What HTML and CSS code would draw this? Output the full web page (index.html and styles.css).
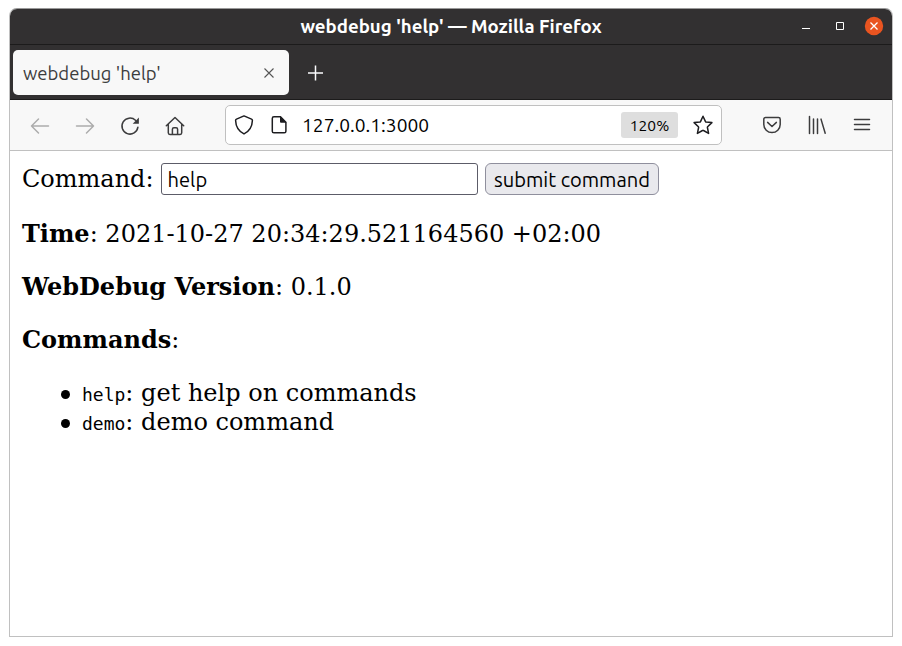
FILE: index.html
```html
<!DOCTYPE html>
<html lang="en">
<head>
<meta charset="utf-8">
<title>webdebug 'help'</title>
<link rel="stylesheet" href="styles.css">
</head>
<body>
<div class="window">
  <header class="titlebar">
    <span class="window-title">webdebug 'help' — Mozilla Firefox</span>
    <div class="window-controls">
      <svg width="10" height="20" viewBox="0 0 10 20"><path d="M1 12.5h8" stroke="#fff"/></svg>
      <svg width="10" height="20" viewBox="0 0 10 20"><path d="M1.500 6.500h7v7h-7z" stroke="#fff" fill="none"/></svg>
      <svg width="20" height="20" viewBox="0 0 20 20"><circle cx="10" cy="10" r="9.200" fill="#e95420"/><path d="M6.500 6.500l7 7m0-7l-7 7" stroke="#fff" stroke-width="1.3"/></svg>
    </div>
  </header>
  <div class="tabs">
    <div class="tab">
      <span class="tab-label">webdebug 'help'</span>
      <svg width="12" height="12" viewBox="0 0 12 12"><path d="M1.500 1.500l9 9m0-9l-9 9" stroke="#555" stroke-width="1.1"/></svg>
    </div>
    <svg class="new-tab" width="16" height="16" viewBox="0 0 16 16"><path d="M8.500 .5v15M1 8h15" stroke="#fbfbfe" stroke-width="1.5"/></svg>
  </div>
  <nav class="toolbar">
    <div class="nav-icons">
      <svg class="disabled" viewBox="0 0 20 20"><path d="M18.500 10H1.500M8.500 3l-7 7 7 7"/></svg>
      <svg class="disabled" viewBox="0 0 20 20"><path d="M1.500 10h17M11.500 3l7 7-7 7"/></svg>
      <svg viewBox="0 0 20 20"><path d="M17.900 11.200A8 8 0 1 1 15.500 4.300"/><path d="M18.900 1.500v6.300h-6.200z" fill="#3c3c3d" stroke="none"/></svg>
      <svg viewBox="0 0 20 20"><path d="M1.300 9.700L10 1.500l8.700 8.200M3.300 8.200v8.600c0 1 .6 1.600 1.600 1.600h10.200c1 0 1.600-.6 1.600-1.600V8.200M7.400 18.400v-5.200c0-.9.6-1.500 1.500-1.500h2.200c.9 0 1.500.6 1.500 1.500v5.200"/></svg>
    </div>
    <div class="urlbar">
      <svg viewBox="0 0 20 20"><path d="M10 .9l7.500 3.200c.6.300.9.700.9 1.300-.2 6.300-2.800 10.600-8.400 13.500C4.400 16 1.800 11.700 1.600 5.400c0-.6.300-1 .9-1.300z"/></svg>
      <svg class="page-icon" viewBox="0 0 20 20"><path d="M11 1.800H4.900c-1 0-1.600.6-1.600 1.600v12.800c0 1 .6 1.600 1.600 1.600h10.400c1 0 1.600-.6 1.600-1.600V7.200L11.500 1.800"/><path d="M11 1.200l6.500 6.600h-5.200c-.8 0-1.300-.5-1.300-1.300z" fill="#1d1d20" stroke="none"/></svg>
      <span class="url">127.0.0.1:3000</span>
      <span class="zoom"><span>120%</span></span>
      <svg class="star" viewBox="0 0 20 20"><path d="M10 1.200l2.500 5.400c.1.200.3.300.5.400l5.900.6-4.300 4.200c-.2.200-.3.400-.2.700l1.200 5.900-5.100-2.900c-.3-.2-.7-.2-1 0l-5.100 2.900 1.200-5.900c.1-.3 0-.5-.2-.7L1.100 7.600 7 7c.2-.1.400-.2.500-.4z"/></svg>
    </div>
    <div class="tool-icons">
      <svg viewBox="0 0 20 20"><path d="M3.500 2.500h13c1 0 1.700.7 1.700 1.700v5.200a8.200 8.200 0 0 1-16.400 0V4.200c0-1 .7-1.700 1.700-1.700zM5.600 7.400L10 11.500l4.400-4.100"/></svg>
      <svg viewBox="0 0 20 20"><path d="M2.500 1.500v17M6.500 4v14.500M10.500 4v14.500M14 4.100l4.200 14.200"/></svg>
      <svg viewBox="0 0 20 20"><path d="M2.500 4.500h15M2.500 9.500h15M2.500 14.500h15"/></svg>
    </div>
  </nav>
  <main class="page">
    <form class="command-form">
      <label for="command">Command:</label>
      <input id="command" type="text" value="help">
      <button type="button"><span>submit command</span></button>
    </form>
    <p><b>Time</b>: 2021-10-27 20:34:29.521164560 +02:00</p>
    <p><b>WebDebug Version</b>: 0.1.0</p>
    <p><b>Commands</b>:</p>
    <ul>
      <li><code>help</code>: get help on commands</li>
      <li><code>demo</code>: demo command</li>
    </ul>
  </main>
</div>
</body>
</html>
```
FILE: styles.css
```css
* { box-sizing: border-box; }
body {
  margin: 0;
  padding: 8px 9px 9px;
  height: 646px;
  background: #fff;
  font-family: Ubuntu, "Noto Sans", sans-serif;
}
svg { display: block; flex: none; }
.window {
  display: flex;
  flex-direction: column;
  width: 884px;
  height: 629px;
  border: 1px solid #c0c0c0;
  border-top-color: #999;
  border-radius: 8px 8px 0 0;
  overflow: hidden;
}
.titlebar {
  display: grid;
  grid-template-columns: 1fr auto 1fr;
  align-items: center;
  height: 36px;
  padding-bottom: 1px;
  background: #323031;
  border-bottom: 1px solid #1c1b1b;
  color: #fff;
}
.window-title {
  grid-column: 2;
  padding-top: 1px;
  font-size: 18.67px;
  font-weight: 700;
  line-height: 24px;
  white-space: nowrap;
}
.window-controls {
  display: flex;
  justify-content: flex-end;
  align-items: center;
  gap: 24px;
  padding: 0 8px 1px 0;
}
.window-controls svg:last-child { margin-left: -5px; }
.tabs {
  display: flex;
  align-items: center;
  height: 55px;
  padding: 0 3px;
  background: #323031;
  border-bottom: 1px solid #1c1b1b;
}
.tab {
  display: flex;
  align-items: center;
  justify-content: space-between;
  width: 276px;
  height: 45px;
  padding: 1px 14px 0 10px;
  border-radius: 5px;
  background: #f8f8f8;
  color: #3c3c3d;
}
.tab-label { padding-top: 1px; font-size: 18.5px; }
.new-tab { margin: 1px 0 0 18px; }
.toolbar {
  display: flex;
  align-items: center;
  flex: none;
  height: 51px;
  background: #f8f8f8;
  border-bottom: 1px solid #c0c0c0;
}
.toolbar svg {
  width: 20px;
  height: 20px;
  fill: none;
  stroke: #3c3c3d;
  stroke-width: 1.5;
  stroke-linecap: round;
  stroke-linejoin: round;
}
.toolbar .disabled { stroke: #acacac; }
.nav-icons, .tool-icons { display: flex; gap: 25px; }
.nav-icons { padding: 1px 0 0 20px; }
.nav-icons svg:last-child { margin-left: -0.5px; }
.urlbar {
  display: flex;
  align-items: center;
  width: 497px;
  height: 40px;
  margin-left: 40.5px;
  padding: 0 8px;
  border: 1px solid #c0c0c0;
  border-radius: 5px;
  background: #fff;
}
.urlbar svg { stroke: #1d1d20; }
.page-icon { margin-left: 15px; }
.url {
  flex: 1;
  margin-left: 13px;
  font-size: 19.2px;
}
.zoom {
  display: flex;
  align-items: center;
  justify-content: center;
  width: 57px;
  height: 26px;
  margin-right: 15px;
  border-radius: 3px;
  background: #dedede;
  font-size: 15.6px;
}
.tool-icons { margin-left: 40px; }
.page {
  flex: 1;
  padding: 12px;
  background: #fff;
  color: #000;
  font: 24px/29px "DejaVu Serif", serif;
}
.command-form {
  display: flex;
  align-items: center;
  height: 32px;
}
.command-form input, .command-form button {
  height: 32px;
  font: 20.1px/28px Ubuntu, "Noto Sans", sans-serif;
  color: #000;
}
.command-form input {
  width: 317px;
  margin-left: 7px;
  padding: 1px 6px;
  border: 1px solid #5c5c68;
  border-radius: 3px;
  background: #fff;
}
.command-form button {
  width: 174px;
  margin-left: 7px;
  padding: 1px 0 0 1px;
  border: 1px solid #8f8f9d;
  border-radius: 6px;
  background: #e9e9ed;
  white-space: nowrap;
}
.page p { height: 29px; margin: 24px 0; }
.page ul { margin: 25px 0; padding-left: 60px; list-style: none; }
.page li { height: 29px; }
.page li::before {
  content: "";
  display: inline-block;
  width: 9px;
  height: 9px;
  margin: 0 12px 0 -21px;
  border-radius: 50%;
  background: #000;
  vertical-align: 2px;
}
.page code { font: 18px/1 "DejaVu Sans Mono", monospace; }
```
